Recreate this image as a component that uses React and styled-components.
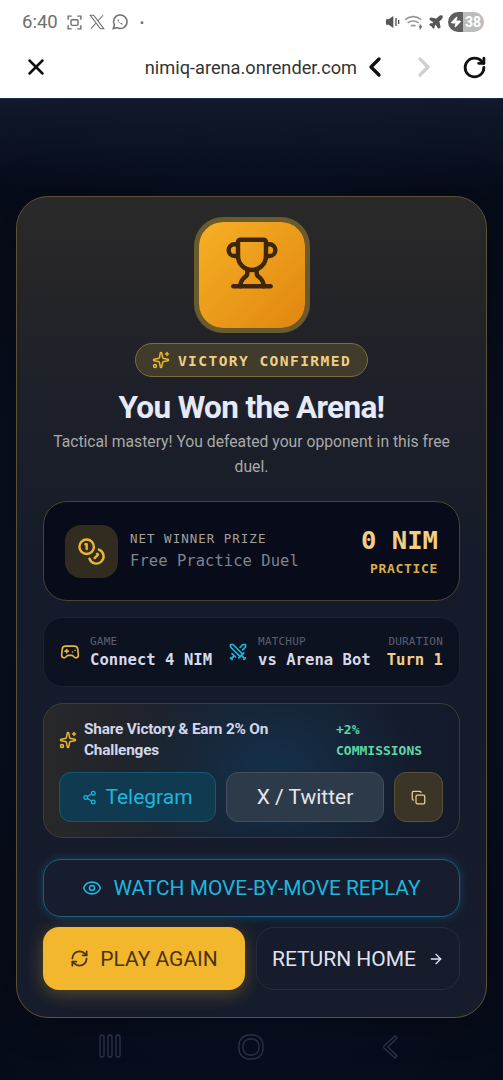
import React from "react";
import styled, { createGlobalStyle } from "styled-components";
import { X, ChevronLeft, ChevronRight, RotateCw, Trophy, Sparkles, Coins, Gamepad2, Swords, Share2, Copy, Eye, RefreshCw, ArrowRight, Plane, Zap } from "lucide-react";

const Global = createGlobalStyle`
  html, body { margin: 0; padding: 0; background: #060b18; }
  * { box-sizing: border-box; }
  body { font-family: Roboto, "Liberation Sans", sans-serif; }
`;
const mono = `"DejaVu Sans Mono", "Liberation Mono", monospace`;

const Screen = styled.div`
  width: 503px; height: 1080px; overflow: hidden; position: relative;
  display: flex; flex-direction: column;
  background: linear-gradient(180deg, rgba(20,30,48,.75) 98px, rgba(8,13,28,0) 190px), radial-gradient(ellipse 420px 700px at 50% 55%, #0d1a30 0%, #070d1c 70%, #050a16 100%);
`;
const Chrome = styled.header`
  height: 98px; background: #fff; display: flex; flex-direction: column; flex: none;
`;
const StatusBar = styled.div`
  height: 40px; padding: 4px 19px 0 22px; display: flex; align-items: center; justify-content: space-between; color: #6f6f6f;
`;
const StatusGroup = styled.div`display: flex; align-items: center; gap: ${p => p.$gap || 5}px;`;
const Clock = styled.span`font-size: 18.5px; font-weight: 400; margin-right: 3px;`;
const Dot = styled.span`font-size: 13px; margin-left: 6px;`;
const Battery = styled.span`
  width: 36px; height: 20px; border-radius: 10px; display: flex; align-items: center; overflow: hidden;
  background: linear-gradient(90deg, #5f5f5f 0 42%, #bdbdbd 42% 100%); color: #fff; font-size: 14px; font-weight: 700; justify-content: space-between; padding: 0 3px 0 2px; margin-left: 1px;
`;
const UrlBar = styled.div`
  flex: 1; display: flex; align-items: center; padding: 0 16px 4px 23px; color: #111;
`;
const Url = styled.span`margin-left: auto; margin-right: 8px; font-size: 18.2px; color: #333;`;
const NavIcons = styled.div`display: flex; align-items: center; width: 122px; justify-content: space-between;`;

const Page = styled.main`flex: 1; padding: 97px 16px 0; border-top: 1px solid #1b2c4a;`;
const Card = styled.section`
  height: 822px; border: 1px solid #5c5233; border-radius: 32px; padding: 21px 26px 26px;
  display: flex; flex-direction: column; align-items: center;
  background: linear-gradient(180deg, #2a2928 0%, #1f2129 22%, #151b2a 45%, #161c2c 100%);
  box-shadow: 0 0 40px rgba(0,0,0,.4);
`;
const TrophyBox = styled.div`
  width: 106px; height: 106px; border-radius: 24px; margin: 4px 0 0; flex: none;
  background: linear-gradient(135deg, #f6b025, #e08610);
  box-shadow: 0 0 0 5px #6b5a2b;
  display: flex; justify-content: center; padding-top: 13px; color: #3f2605;
`;
const Badge = styled.div`
  margin-top: 15px; height: 34px; width: 233px; border-radius: 17px; border: 1px solid #7b6c3f; background: #413b2b;
  display: flex; align-items: center; justify-content: center; gap: 8px;
  color: #eecf85; font: 700 14.6px ${mono}; letter-spacing: 1.4px;
`;
const Title = styled.h1`margin: 14px 0 0; font-size: 31.5px; line-height: 34px; font-weight: 700; letter-spacing: -.65px; color: #e6e9f8;`;
const Lead = styled.p`margin: 4px 0 0; text-align: center; color: #a8a9a8; font-size: 15.7px; line-height: 25px; width: 405px;`;
const Prize = styled.div`
  width: 100%; height: 100px; margin-top: 22px; border: 1px solid #4a452f; border-radius: 24px; background: #080c1a; flex: none;
  display: flex; align-items: center; padding: 0 21px;
`;
const CoinBox = styled.div`
  width: 53px; height: 53px; border-radius: 16px; background: #322b20; color: #e9b632; display: flex; align-items: center; justify-content: center; flex: none;
`;
const PrizeText = styled.div`margin-left: 12px; flex: 1; font-family: ${mono}; padding-top: 1px;`;
const PrizeLabel = styled.div`font-size: 12.5px; line-height: 16px; letter-spacing: 1px; color: #a4a29b;`;
const PrizeSub = styled.div`font-size: 15.5px; line-height: 22px; color: #7d828f; margin-top: 3px; letter-spacing: .05px;`;
const PrizeValue = styled.div`text-align: right; font-family: ${mono};`;
const Amount = styled.div`font-size: 25.6px; line-height: 32px; font-weight: 700; color: #f2cf85;`;
const AmountTag = styled.div`font-size: 13px; line-height: 18px; font-weight: 700; color: #deaf45; margin-top: 4px; letter-spacing: .67px;`;
const Stats = styled.div`
  width: 100%; height: 70px; margin-top: 16px; border: 1px solid #1a2234; border-radius: 20px; background: #0d1221; flex: none;
  display: flex; align-items: center; padding: 0 16px; font-family: ${mono};
`;
const Stat = styled.div`
  margin-left: ${p => p.$right ? "auto" : 0}; text-align: ${p => p.$right ? "right" : "left"};
`;
const StatIcon = styled.span`display: flex; color: ${p => p.$c}; margin-left: ${p => p.$ml || 0}px; margin-right: 10px;`;
const StatLabel = styled.div`font-size: 11px; line-height: 14px; color: #5b6072; letter-spacing: .2px;`;
const StatValue = styled.div`font-size: 15.6px; line-height: 20px; font-weight: 700; color: ${p => p.$c || "#d5d9ea"}; margin-top: 1px; white-space: nowrap;`;
const Share = styled.div`
  width: 100%; height: 135px; margin-top: 16px; border: 1px solid #3e3d36; border-radius: 20px; flex: none; padding: 15px 15px 0;
  background: radial-gradient(ellipse 150px 120px at 55% 50%, #14304a 0%, rgba(20,48,74,0) 100%), linear-gradient(90deg, #28282a, #181e2c 45%, #121a2b);
`;
const ShareTop = styled.div`display: flex; align-items: center; height: 42px;`;
const ShareSpark = styled.span`display: flex; color: #e9b632; margin-right: 7px;`;
const ShareTitle = styled.div`width: 210px; margin-right: 42px; flex: none; font-size: 15.4px; line-height: 21px; font-weight: 700; color: #d3d6e6; letter-spacing: -.2px;`;
const Commission = styled.div`font: 700 13px/21px ${mono}; color: #5fd6a4; white-space: nowrap;`;
const ShareButtons = styled.div`display: flex; gap: 10px; margin-top: 11px;`;
const ShareBtn = styled.button`
  width: ${p => p.$w}px; height: 50px; border-radius: 12px; border: 1px solid ${p => p.$bd}; background: ${p => p.$bg}; color: ${p => p.$c};
  display: flex; align-items: center; justify-content: center; gap: 8px; font: 400 21px Roboto, sans-serif; padding: 0; flex: none;
`;
const Replay = styled.button`
  width: 100%; height: 58px; margin-top: 21px; flex: none; border-radius: 18px; border: 1px solid #17607f; background: #171c2e; color: #1cb6dc;
  box-shadow: 0 0 10px rgba(28,160,220,.28);
  display: flex; align-items: center; justify-content: center; gap: 11px; font: 400 20.9px Roboto, sans-serif; padding: 0;
`;
const Actions = styled.div`width: 100%; display: flex; gap: 11px; margin-top: 10px;`;
const PlayBtn = styled.button`
  width: 202px; height: 63px; border: 0; border-radius: 16px; background: #f3b72e; color: #4a3410; flex: none;
  box-shadow: 0 4px 18px rgba(243,183,46,.3);
  display: flex; align-items: center; justify-content: center; gap: 11px; font: 400 21px Roboto, sans-serif; padding: 0;
`;
const HomeBtn = styled.button`
  flex: 1; height: 63px; border: 1px solid #252c40; border-radius: 18px; background: #171c2c; color: #dfe3f0;
  display: flex; align-items: center; justify-content: center; gap: 12px; font: 400 21px Roboto, sans-serif; padding: 0;
`;
const NavBar = styled.div`
  position: absolute; left: 0; right: 0; top: 1034px; display: flex; padding: 0 103px 0 98px; justify-content: space-between; color: #2b3144;
`;

const XMark = () => (
  <svg width="18" height="18" viewBox="0 0 24 24" fill="none" stroke="#6f6f6f" strokeWidth="1.5"><path d="M3 3h4.5L21 21h-4.5zM20 3l-7 8M4 21l7-8"/></svg>
);
const WhatsApp = () => (
  <svg width="18" height="18" viewBox="0 0 24 24" fill="none" stroke="#6f6f6f" strokeWidth="2"><path d="M3 21l1.5-5A9 9 0 1 1 8 19.5z"/><path d="M9 8c-1 1 0 3 2 5s4 3 5 2l-2-2-1 1-3-3 1-1z" fill="#6f6f6f" stroke="none"/></svg>
);
const ScreenShot = () => (
  <svg width="17" height="17" viewBox="0 0 24 24" fill="none" stroke="#6f6f6f" strokeWidth="2"><path d="M3 8V3h5M16 3h5v5M21 16v5h-5M8 21H3v-5"/><rect x="7" y="8" width="10" height="8" rx="2"/></svg>
);
const Muted = () => (
  <svg width="16" height="16" viewBox="0 0 24 24" fill="#555"><path d="M3 8h4l7-5v18l-7-5H3z"/><path d="M18 6v12M22 9v6" stroke="#555" strokeWidth="2"/></svg>
);
const Wifi = () => (
  <svg width="22" height="16" viewBox="0 0 24 20" fill="none" stroke="#9a9a9a" strokeWidth="2"><path d="M1 7c6-5 14-5 20 0M4 11c4-3 10-3 14 0M8 15c2-1 4-1 6 0"/><path d="M20 13v6M18 16h4" stroke="#777"/></svg>
);

export default function App() {
  return (
    <Screen>
      <Global />
      <Chrome>
        <StatusBar>
          <StatusGroup>
            <Clock>6:40</Clock><ScreenShot /><XMark /><WhatsApp />
            <Dot>•</Dot>
          </StatusGroup>
          <StatusGroup $gap={3}>
            <Muted /><Wifi /><Plane size={16} fill="#555" color="#555" />
            <Battery><Zap size={12} fill="#fff" />38</Battery>
          </StatusGroup>
        </StatusBar>
        <UrlBar>
          <X size={26} strokeWidth={2.3} />
          <Url>nimiq-arena.onrender.com</Url>
          <NavIcons>
            <ChevronLeft size={32} strokeWidth={2.5} style={{ margin: "0 -6px" }} />
            <ChevronRight size={32} strokeWidth={2.5} color="#cfcfcf" />
            <RotateCw size={25} strokeWidth={2.7} />
          </NavIcons>
        </UrlBar>
      </Chrome>
      <Page>
        <Card>
          <TrophyBox><Trophy size={56} strokeWidth={1.9} /></TrophyBox>
          <Badge><Sparkles size={18} color="#eab730" />VICTORY CONFIRMED</Badge>
          <Title>You Won the Arena!</Title>
          <Lead>Tactical mastery! You defeated your opponent in this free duel.</Lead>
          <Prize>
            <CoinBox><Coins size={29} strokeWidth={2} /></CoinBox>
            <PrizeText>
              <PrizeLabel>NET WINNER PRIZE</PrizeLabel>
              <PrizeSub>Free Practice Duel</PrizeSub>
            </PrizeText>
            <PrizeValue>
              <Amount>0 NIM</Amount>
              <AmountTag>PRACTICE</AmountTag>
            </PrizeValue>
          </Prize>
          <Stats>
            <StatIcon $c="#e5b53c"><Gamepad2 size={20} /></StatIcon>
            <Stat><StatLabel>GAME</StatLabel><StatValue>Connect 4 NIM</StatValue></Stat>
            <StatIcon $c="#1cb6dc" $ml={16}><Swords size={20} /></StatIcon>
            <Stat><StatLabel>MATCHUP</StatLabel><StatValue>vs Arena Bot</StatValue></Stat>
            <Stat $right><StatLabel>DURATION</StatLabel><StatValue $c="#f0d08a">Turn 1</StatValue></Stat>
          </Stats>
          <Share>
            <ShareTop>
              <ShareSpark><Sparkles size={18} /></ShareSpark>
              <ShareTitle>Share Victory &amp; Earn 2% On Challenges</ShareTitle>
              <Commission>+2%<br />COMMISSIONS</Commission>
            </ShareTop>
            <ShareButtons>
              <ShareBtn $w={157} $bd="#155a73" $bg="#103a50" $c="#1cb6dc"><Share2 size={15} />Telegram</ShareBtn>
              <ShareBtn $w={158} $bd="#46505f" $bg="#2d3a49" $c="#e3e6ee">X / Twitter</ShareBtn>
              <ShareBtn $w={49} $bd="#5a5137" $bg="#3a3527" $c="#eecf85"><Copy size={15} /></ShareBtn>
            </ShareButtons>
          </Share>
          <Replay><Eye size={20} />WATCH MOVE-BY-MOVE REPLAY</Replay>
          <Actions>
            <PlayBtn><RefreshCw size={19} strokeWidth={2.2} />PLAY AGAIN</PlayBtn>
            <HomeBtn>RETURN HOME<ArrowRight size={16} /></HomeBtn>
          </Actions>
        </Card>
      </Page>
      <NavBar>
        <svg width="24" height="24" viewBox="0 0 24 24" fill="none" stroke="currentColor" strokeWidth="1.4"><rect x="2" y="1" width="4" height="22" rx="2"/><rect x="10" y="1" width="4" height="22" rx="2"/><rect x="18" y="1" width="4" height="22" rx="2"/></svg>
        <svg width="26" height="26" viewBox="0 0 26 26" fill="none" stroke="currentColor" strokeWidth="1.4"><rect x="1" y="1" width="24" height="24" rx="10"/><rect x="5" y="5" width="16" height="16" rx="7"/></svg>
        <svg width="20" height="26" viewBox="0 0 20 26" fill="none" stroke="currentColor" strokeWidth="1.4"><path d="M15 2 4 12a1.5 1.5 0 0 0 0 2l11 10 2-2L8 13l9-9z"/></svg>
      </NavBar>
    </Screen>
  );
}
